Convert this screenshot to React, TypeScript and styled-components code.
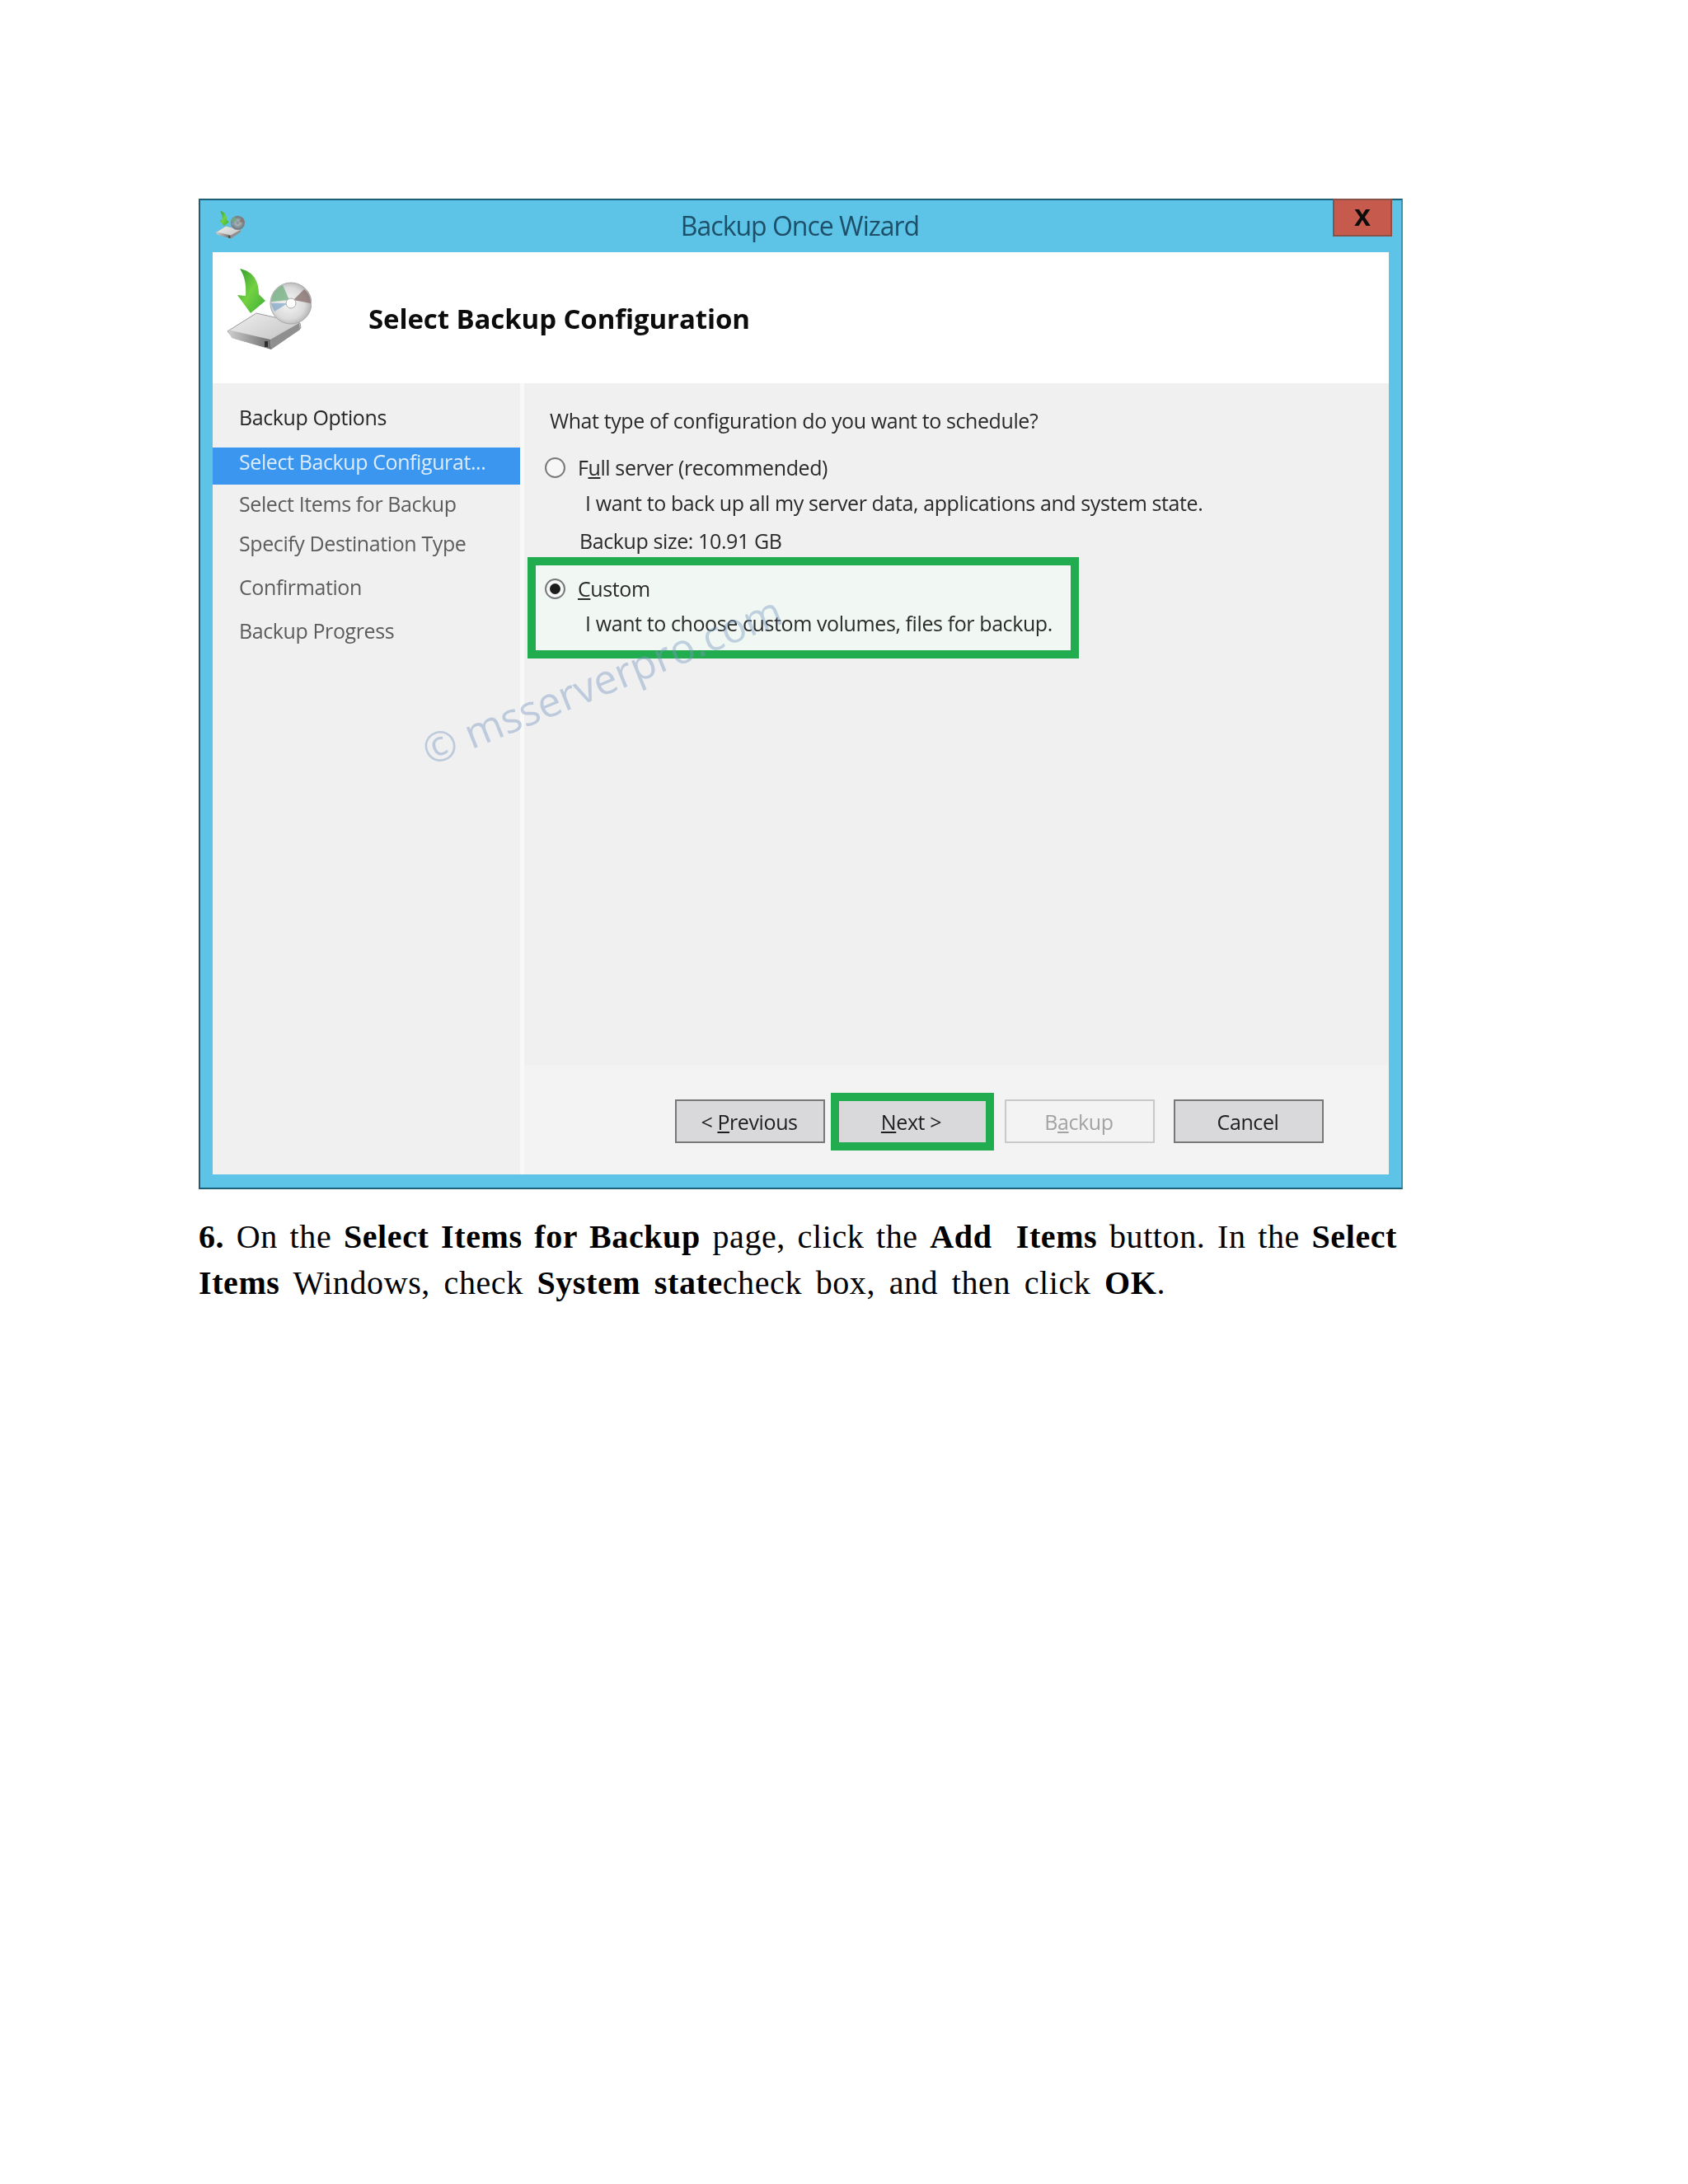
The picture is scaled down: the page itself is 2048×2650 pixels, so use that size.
import styled, { createGlobalStyle } from 'styled-components';

const GlobalStyle = createGlobalStyle`
	html, body {
		margin: 0;
		padding: 0;
		background: #ffffff;
	}
`;

const Sheet = styled.div`
	width: 2048px;
	height: 2650px;
	box-sizing: border-box;
	padding: 241px 0 0 241px;
	overflow: hidden;
`;

const Window = styled.div`
	position: relative;
	width: 1461px;
	height: 1202px;
	box-sizing: border-box;
	display: flex;
	flex-direction: column;
	padding: 0 15px 16px 15px;
	background: #5dc4e8;
	border: 2px solid #1c5f78;
	border-right-color: #3a94b4;
	font-family: 'Open Sans', 'Noto Sans', sans-serif;
	font-size: 25px;
	letter-spacing: -0.4px;
	filter: blur(0.65px);
`;

const TitleBar = styled.div`
	height: 63px;
	margin: 0 -15px;
	padding: 0 20px 2px 18px;
	box-sizing: border-box;
	display: grid;
	grid-template-columns: 1fr auto 1fr;
	align-items: center;
`;

const WindowTitle = styled.div`
	font-size: 32px;
	letter-spacing: -1px;
	color: #1d4f68;
`;

const CloseButton = styled.div`
	justify-self: end;
	align-self: start;
	width: 72px;
	height: 46px;
	margin: -2px -9px 0 0;
	box-sizing: border-box;
	display: flex;
	align-items: center;
	justify-content: center;
	padding-bottom: 4px;
	background: #c65a4c;
	border: 2px solid #8b5048;
	color: #0c0c0c;
	font-family: 'Liberation Sans', sans-serif;
	font-size: 36px;
	font-weight: 700;
	letter-spacing: 0;
`;

const Header = styled.div`
	height: 159px;
	display: flex;
	align-items: center;
	gap: 69px;
	padding-left: 15px;
	background: #ffffff;
`;

const HeaderIcon = styled.div`
	display: flex;
	margin-bottom: 20px;
`;

const Heading = styled.h1`
	margin: 2px 0 0;
	font-size: 33px;
	font-weight: 700;
	letter-spacing: -0.1px;
	color: #0c0c0c;
`;

const Panes = styled.div`
	flex: 1;
	display: flex;
	background: #f0f0f1;
`;

const Sidebar = styled.div`
	width: 378px;
	box-sizing: border-box;
	flex-shrink: 0;
	padding-top: 18px;
	border-right: 5px solid #f9f9fa;
	display: flex;
	flex-direction: column;
`;

const StepRow = styled.div<{ $active?: boolean; $current?: boolean; $gap: number }>`
	height: 45px;
	box-sizing: border-box;
	margin-top: ${(props) => props.$gap}px;
	padding: 0 0 ${(props) => (props.$active ? 12 : 0)}px 32px;
	display: flex;
	align-items: center;
	background: ${(props) => (props.$active ? '#3a96ef' : 'transparent')};
	color: ${(props) => (props.$active ? '#dcecfd' : props.$current ? '#262626' : '#5c5c5c')};
`;

const Main = styled.div`
	flex: 1;
	display: flex;
	flex-direction: column;
`;

const Content = styled.div`
	flex: 1;
	padding-top: 25px;
	color: #2a2a2a;
`;

const TextLine = styled.div<{ $indent: number; $gap?: number }>`
	height: 40px;
	margin-top: ${(props) => props.$gap ?? 0}px;
	padding-left: ${(props) => props.$indent}px;
	display: flex;
	align-items: center;
	white-space: nowrap;
`;

const Radio = styled.span<{ $checked?: boolean }>`
	width: 25px;
	height: 25px;
	box-sizing: border-box;
	margin-right: 15px;
	flex-shrink: 0;
	display: flex;
	align-items: center;
	justify-content: center;
	border-radius: 50%;
	border: 2px solid #77797c;
	background: #f7f7f8;

	&::after {
		content: '';
		display: ${(props) => (props.$checked ? 'block' : 'none')};
		width: 13px;
		height: 13px;
		border-radius: 50%;
		background: #1c1c1c;
	}
`;

const CustomBox = styled.div`
	width: 669px;
	height: 123px;
	box-sizing: border-box;
	margin: 0 0 0 4px;
	padding-top: 8px;
	border: 10px solid #22ac50;
	background: #f1f8f3;
`;

const Footer = styled.div`
	height: 133px;
	box-sizing: border-box;
	padding: 4px 0 0 183px;
	display: flex;
	align-items: center;
	background: #f3f3f4;
`;

const WizardButton = styled.div<{ $disabled?: boolean }>`
	width: 182px;
	height: 53px;
	box-sizing: border-box;
	padding-right: 2px;
	display: flex;
	align-items: center;
	justify-content: center;
	background: ${(props) => (props.$disabled ? '#f3f3f4' : '#d9d9db')};
	border: 2px solid ${(props) => (props.$disabled ? '#c9c9ca' : '#77787a')};
	color: ${(props) => (props.$disabled ? '#a3a3a5' : '#1e1e1e')};
`;

const HighlightedButton = styled.div`
	width: 198px;
	height: 70px;
	box-sizing: border-box;
	margin: 0 13px 0 7px;
	padding-right: 3px;
	display: flex;
	align-items: center;
	justify-content: center;
	background: #d9d9db;
	border: 10px solid #22ac50;
	color: #1e1e1e;
`;

const CancelGap = styled.div`
	width: 23px;
`;

const Watermark = styled.div`
	position: absolute;
	left: 487px;
	top: 582px;
	transform: translate(-50%, -50%) rotate(-22deg);
	font-size: 50px;
	font-weight: 500;
	letter-spacing: 0;
	white-space: nowrap;
	color: rgba(120, 150, 190, 0.42);
`;

const Paragraph = styled.p`
	width: 1454px;
	margin: 30px 0 0;
	font-family: 'Liberation Serif', serif;
	font-size: 40px;
	line-height: 56px;
	letter-spacing: 0.6px;
	word-spacing: 2px;
	text-align: justify;
	color: #000000;
`;

const LooseWords = styled.span`
	word-spacing: 6px;
`;

function DriveIcon({ size, dark }: { size: number; dark?: boolean }) {
	return (
		<svg width={size} height={(size * 100) / 105} viewBox="0 0 105 100">
			<defs>
				<linearGradient id="arrowFill" x1="0" y1="0" x2="1" y2="1">
					<stop offset="0" stopColor="#2f9a2c" />
					<stop offset="0.5" stopColor="#73d143" />
					<stop offset="1" stopColor="#3aae33" />
				</linearGradient>
				<linearGradient id="driveTop" x1="0" y1="0" x2="1" y2="1">
					<stop offset="0" stopColor="#f0f0f0" />
					<stop offset="1" stopColor="#bcbcbc" />
				</linearGradient>
				<linearGradient id="driveFront" x1="0" y1="0" x2="1" y2="0">
					<stop offset="0" stopColor="#cfcfcf" />
					<stop offset="1" stopColor="#6d6d6d" />
				</linearGradient>
				<radialGradient id="discFill" cx="0.45" cy="0.5" r="0.6">
					<stop offset="0" stopColor="#f6f6f6" />
					<stop offset="0.65" stopColor="#dadada" />
					<stop offset="1" stopColor="#a6a6a6" />
				</radialGradient>
				<radialGradient id="discDark" cx="0.5" cy="0.5" r="0.6">
					<stop offset="0" stopColor="#c8cdd0" />
					<stop offset="1" stopColor="#4f6068" />
				</radialGradient>
			</defs>
			<path d="M38 54 L91 66 L92 72 L56 97 L10 84 L3 76 Z" fill="url(#driveTop)" stroke="#9b9b9b" strokeWidth="1" />
			<path d="M3 74 L55 86 L56 98 L8 84 Z" fill="url(#driveFront)" />
			<path d="M55 86 L90 66 L91 74 L56 98 Z" fill="#8f8f8f" />
			<rect x="48" y="88" width="4" height="7" fill="#2e2e2e" />
			<circle cx="80" cy="42" r="25" fill={dark ? 'url(#discDark)' : 'url(#discFill)'} stroke="#a8a8a8" strokeWidth="1" />
			<path d="M56 40 C57 30 62 24 70 20 L78 38 Z" fill="#6fae7d" opacity="0.75" />
			<path d="M60 52 C58 48 57 46 56 42 L76 42 Z" fill="#7fa6c9" opacity="0.7" />
			<path d="M104 42 C104 35 101 29 96 25 L83 38 Z" fill="#8a7370" opacity="0.8" />
			<circle cx="80" cy="42" r="6" fill={dark ? '#8b979d' : '#ffffff'} stroke="#a8a8a8" strokeWidth="1" />
			<path d="M18 0 C32 3 41 12 41 31 L49 39 L31 54 L15 32 L25 33 C26 20 24 9 18 0 Z" fill="url(#arrowFill)" />
		</svg>
	);
}

function App() {
	return (
		<Sheet>
			<GlobalStyle />
			<Window>
				<TitleBar>
					<DriveIcon size={36} dark />
					<WindowTitle>Backup Once Wizard</WindowTitle>
					<CloseButton>x</CloseButton>
				</TitleBar>
				<Header>
					<HeaderIcon>
						<DriveIcon size={105} />
					</HeaderIcon>
					<Heading>Select Backup Configuration</Heading>
				</Header>
				<Panes>
					<Sidebar>
						<StepRow $current $gap={0}>Backup Options</StepRow>
						<StepRow $active $gap={15}>Select Backup Configurat...</StepRow>
						<StepRow $gap={0}>Select Items for Backup</StepRow>
						<StepRow $gap={3}>Specify Destination Type</StepRow>
						<StepRow $gap={8}>Confirmation</StepRow>
						<StepRow $gap={8}>Backup Progress</StepRow>
					</Sidebar>
					<Main>
						<Content>
							<TextLine $indent={31}>What type of configuration do you want to schedule?</TextLine>
							<TextLine $indent={25} $gap={17}>
								<Radio />
								<span>F<u>u</u>ll server (recommended)</span>
							</TextLine>
							<TextLine $indent={74} $gap={3}>I want to back up all my server data, applications and system state.</TextLine>
							<TextLine $indent={67} $gap={6}>Backup size: 10.91 GB</TextLine>
							<CustomBox>
								<TextLine $indent={11}>
									<Radio $checked />
									<span><u>C</u>ustom</span>
								</TextLine>
								<TextLine $indent={60} $gap={2}>I want to choose custom volumes, files for backup.</TextLine>
							</CustomBox>
						</Content>
						<Footer>
							<WizardButton>&lt;&nbsp;<u>P</u>revious</WizardButton>
							<HighlightedButton><u>N</u>ext &gt;</HighlightedButton>
							<WizardButton $disabled>B<u>a</u>ckup</WizardButton>
							<CancelGap />
							<WizardButton>Cancel</WizardButton>
						</Footer>
					</Main>
				</Panes>
				<Watermark>© msserverpro.com</Watermark>
			</Window>
			<Paragraph>
				<b>6.</b> On the <b>Select Items for Backup</b> page, click the <b>Add&nbsp; Items</b> button. In the <b>Select</b> <LooseWords><b>Items</b> Windows, check <b>System state</b>check box, and then click <b>OK</b>.</LooseWords>
			</Paragraph>
		</Sheet>
	);
}

export default App;
